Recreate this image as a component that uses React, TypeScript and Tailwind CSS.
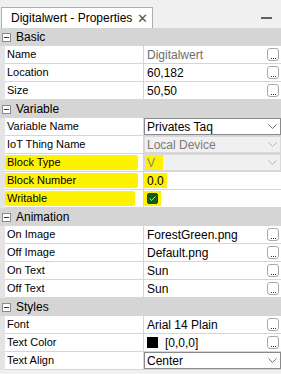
import React from "react";

const Chevron = ({ light }: { light?: boolean }) => (
  <svg width="9" height="5" viewBox="0 0 9 5" className="mr-[3px]">
    <polyline points="0.5,0.5 4.5,4.5 8.5,0.5" fill="none" stroke={light ? "#b5b5b5" : "#707070"} strokeWidth="1" />
  </svg>
);

const Ellipsis = () => (
  <div className="ml-auto mr-[2px] w-[12px] h-[13px] border border-[#a9a9a9] rounded-[3px] bg-white flex items-end justify-center pb-[1px]">
    <div className="flex gap-[1px]">
      <div className="w-[1px] h-[1px] bg-[#333]" />
      <div className="w-[1px] h-[1px] bg-[#333]" />
      <div className="w-[1px] h-[1px] bg-[#333]" />
    </div>
  </div>
);

const Header = ({ title }: { title: string }) => (
  <div className="flex items-center h-[18px] bg-[#d5d5d5]">
    <div className="ml-[2px] w-[9px] h-[9px] border border-[#8c8c8c] bg-white flex items-center justify-center">
      <div className="w-[5px] h-[1px] bg-[#333]" />
    </div>
    <span className="ml-[5px] text-[12px] text-black leading-none">{title}</span>
  </div>
);

const Row = ({
  name,
  children,
  hl,
}: {
  name: string;
  children: React.ReactNode;
  hl?: string;
}) => (
  <div className="flex h-[18px]">
    <div className="w-[5px] bg-[#e4e4e4]" />
    <div className="w-[139px] border-b border-r border-[#d5d5d5] bg-white flex items-center">
      {hl ? (
        <div className={`h-[15px] bg-[#fff200] flex items-center pl-[2px] rounded-[2px] ${hl}`}>
          <span className="text-[11px] text-black leading-none">{name}</span>
        </div>
      ) : (
        <span className="pl-[2px] text-[11px] text-black leading-none">{name}</span>
      )}
    </div>
    <div className="flex-1 border-b border-[#d5d5d5] bg-white flex items-center">{children}</div>
  </div>
);

const Val = ({ text, gray }: { text: string; gray?: boolean }) => (
  <>
    <span className={`pl-[3px] text-[12px] leading-none ${gray ? "text-[#6d6d6d]" : "text-black"}`}>{text}</span>
    <Ellipsis />
  </>
);

export default function App() {
  return (
    <div className="w-[281px] h-[374px] bg-[#f0f0f0] overflow-hidden font-['Liberation_Sans',Arial,sans-serif]">
      <div className="h-[28px] flex items-end justify-between">
        <div className="ml-[1px] w-[152px] h-[21px] border border-b-0 border-[#acacac] bg-white flex items-center pl-[9px]">
          <span className="text-[12px] text-black leading-none">Digitalwert - Properties</span>
          <span className="ml-[5px] text-[13px] text-[#555] leading-none">✕</span>
        </div>
        <div className="w-[11px] h-[2px] bg-[#606060] mb-[9px] mr-[9px]" />
      </div>

      <Header title="Basic" />
      <Row name="Name">
        <Val text="Digitalwert" gray />
      </Row>
      <Row name="Location">
        <Val text="60,182" />
      </Row>
      <Row name="Size">
        <Val text="50,50" />
      </Row>

      <Header title="Variable" />
      <Row name="Variable Name">
        <div className="w-full h-[17px] border border-[#8a8a8a] bg-white flex items-center justify-between">
          <span className="pl-[2px] text-[12px] text-black leading-none">Privates Taq</span>
          <Chevron />
        </div>
      </Row>
      <Row name="IoT Thing Name">
        <div className="w-full h-[17px] border border-[#d9d9d9] bg-[#f0f0f0] flex items-center justify-between">
          <span className="pl-[2px] text-[12px] text-[#7a7a7a] leading-none">Local Device</span>
          <Chevron light />
        </div>
      </Row>
      <Row name="Block Type" hl="w-[133px]">
        <div className="w-full h-[17px] border border-[#d9d9d9] bg-[#f0f0f0] flex items-center justify-between">
          <span className="h-[15px] w-[18px] bg-[#fff200] flex items-center pl-[2px] text-[12px] text-[#8a8a60] leading-none">V</span>
          <Chevron light />
        </div>
      </Row>
      <Row name="Block Number" hl="w-[133px]">
        <span className="h-[15px] w-[23px] bg-[#fff200] flex items-center pl-[3px] text-[12px] text-black leading-none">0.0</span>
      </Row>
      <Row name="Writable" hl="w-[130px]">
        <div className="h-[15px] w-[17px] bg-[#fff200] flex items-center pl-[3px]">
          <div className="w-[11px] h-[11px] rounded-[2px] bg-[#0e5a16] border border-[#0d4a40] flex items-center justify-center">
            <svg width="7" height="5" viewBox="0 0 7 5">
              <polyline points="0.5,2.5 2.5,4.3 6.5,0.5" fill="none" stroke="#b8e0b0" strokeWidth="1" />
            </svg>
          </div>
        </div>
      </Row>

      <Header title="Animation" />
      <Row name="On Image">
        <Val text="ForestGreen.png" />
      </Row>
      <Row name="Off Image">
        <Val text="Default.png" />
      </Row>
      <Row name="On Text">
        <Val text="Sun" />
      </Row>
      <Row name="Off Text">
        <Val text="Sun" />
      </Row>

      <Header title="Styles" />
      <Row name="Font">
        <Val text="Arial 14 Plain" />
      </Row>
      <Row name="Text Color">
        <div className="ml-[3px] w-[11px] h-[11px] bg-black" />
        <span className="ml-[7px] text-[12px] text-black leading-none">[0,0,0]</span>
        <Ellipsis />
      </Row>
      <Row name="Text Align">
        <div className="w-full h-[17px] border border-[#8a8a8a] bg-white flex items-center justify-between">
          <span className="pl-[2px] text-[12px] text-black leading-none">Center</span>
          <Chevron />
        </div>
      </Row>
    </div>
  );
}
